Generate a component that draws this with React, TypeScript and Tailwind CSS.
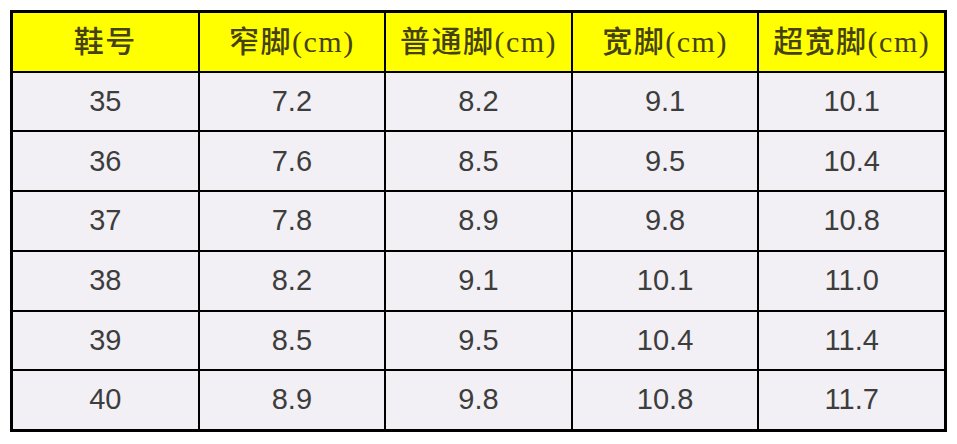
const headers = ['鞋号', '窄脚(cm)', '普通脚(cm)', '宽脚(cm)', '超宽脚(cm)'];

const rows = [
  ['35', '7.2', '8.2', '9.1', '10.1'],
  ['36', '7.6', '8.5', '9.5', '10.4'],
  ['37', '7.8', '8.9', '9.8', '10.8'],
  ['38', '8.2', '9.1', '10.1', '11.0'],
  ['39', '8.5', '9.5', '10.4', '11.4'],
  ['40', '8.9', '9.8', '10.8', '11.7'],
];

export default function App() {
  return (
    <div className="w-[957px] h-[444px] bg-white pt-[10px] pl-[10px]">
      <div className="w-[937px] h-[422px] bg-black p-[3px] grid grid-cols-5 grid-rows-7 gap-[2px]">
        {headers.map((h) => (
          <div
            key={h}
            className="bg-[#ffff00] flex items-center justify-center text-[30px] tracking-[1.5px] font-medium text-[#454210]"
            style={{ fontFamily: '"Liberation Serif", "Noto Sans CJK SC", serif' }}
          >
            {h}
          </div>
        ))}
        {rows.map((row) =>
          row.map((v, i) => (
            <div
              key={row[0] + '-' + i}
              className="bg-[#f2f0f5] flex items-center justify-center text-[29px] text-[#3d3d3d] font-['Liberation_Sans',sans-serif]"
            >
              {v}
            </div>
          ))
        )}
      </div>
    </div>
  );
}
